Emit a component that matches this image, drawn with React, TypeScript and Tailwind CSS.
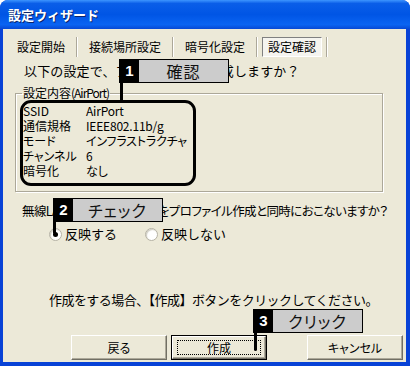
import React from "react";

const font = "font-['MS_UI_Gothic','Noto_Sans_CJK_JP',sans-serif]";
const palt = "[font-feature-settings:'palt']";

const Callout = ({ num, label, className }: { num: string; label: string; className: string }) => (
  <div className={`absolute flex h-[24px] w-[110px] border border-black ${className}`}>
    <div className="flex w-[19px] items-center justify-center bg-black font-['Liberation_Sans',sans-serif] text-[15px] font-bold text-white">
      {num}
    </div>
    <div className={`flex flex-1 items-center justify-center bg-[#cccccc] text-[16px] tracking-[1px] text-[#111] ${palt}`}>
      {label}
    </div>
  </div>
);

const Button = ({ label, primary }: { label: string; primary?: boolean }) => (
  <div className={`h-[25px] w-[96px] ${primary ? "border border-black" : ""}`}>
    <div className={`flex h-full w-full items-center justify-center border border-t-white border-l-white border-r-[#716f64] border-b-[#716f64] bg-[#ece9d8] text-[12px] shadow-[inset_-1px_-1px_0_#aca899] ${palt}`}>
      {primary ? (
        <span className="flex h-[15px] w-[84px] items-center justify-center border border-dotted border-black">
          {label}
        </span>
      ) : (
        label
      )}
    </div>
  </div>
);

const Radio = ({ checked }: { checked?: boolean }) => (
  <div className="flex h-[13px] w-[13px] items-center justify-center rounded-full border border-[#b5b2a4] bg-white shadow-[inset_1px_1px_1px_#cfcdc2]">
    {checked && <div className="h-[5px] w-[5px] rounded-full bg-black" />}
  </div>
);

const Sep = () => <div className="h-[20px] w-[2px] border-l border-l-[#aca899] border-r border-r-white" />;

const rows = [
  ["SSID", "AirPort"],
  ["通信規格", "IEEE802.11b/g"],
  ["モード", "インフラストラクチャ"],
  ["チャンネル", "6"],
  ["暗号化", "なし"],
];

export default function App() {
  return (
    <div className={`h-[366px] w-[410px] bg-white text-black ${font}`}>
      <div className="flex h-full w-full flex-col overflow-hidden rounded-t-[8px] bg-[#0842d6]">
        {/* title bar */}
        <div className="flex h-[29px] items-center bg-[linear-gradient(#3d95ff_0%,#0a5ee8_12%,#0055e5_50%,#0a64f2_85%,#0748d4_100%)] pl-[8px]">
          <span className="text-[13px] font-bold text-white [text-shadow:1px_1px_0_#0a246a]">設定ウィザード</span>
        </div>

        {/* client */}
        <div className="relative mb-[4px] ml-[3px] mr-[4px] flex flex-1 flex-col bg-[#ece9d8]">
          <div className="mt-[8px] flex h-[20px] items-center pl-[14px] text-[12px]">
            <span className="pr-[11px]">設定開始</span>
            <Sep />
            <span className="px-[11px]">接続場所設定</span>
            <Sep />
            <span className="px-[11px]">暗号化設定</span>
            <Sep />
            <span className="mx-[4px] flex h-[20px] items-center border border-t-[#808080] border-l-[#808080] border-b-white border-r-white bg-[#f5f4ef] px-[5px]">
              設定確認
            </span>
            <Sep />
          </div>

          <div className="mt-[5px] h-[18px] pl-[21px] text-[13px] leading-[18px] tracking-[0.15px]">
            以下の設定で、プロファイルを作成しますか？
          </div>

          <fieldset className="ml-[12px] mt-[6px] h-[106px] w-[368px] border border-[#aca899] px-[4px] pb-0 shadow-[inset_1px_1px_0_#fff,1px_1px_0_#fff]">
            <legend className={`ml-[2px] px-[1px] text-[12px] leading-[14px] ${palt}`}>
              設定内容<span className="tracking-[-1px]">(AirPort)</span>
            </legend>
            <div className={`w-[176px] rounded-[11px] border-[3px] border-black pb-[5px] text-[12px] leading-[15px] ${palt}`}>
              {rows.map(([k, v]) => (
                <div key={k} className="flex">
                  <span className="w-[63px]">{k}</span>
                  <span className="tracking-[-0.2px]">{v}</span>
                </div>
              ))}
            </div>
          </fieldset>

          <div className={`mt-[11px] h-[16px] whitespace-nowrap pl-[19px] text-[12.5px] leading-[16px] tracking-[-0.6px] ${palt}`}>
            無線LANアダプタへの設定をプロファイル作成と同時におこないますか？
          </div>

          <div className="mt-[7px] flex h-[16px] items-center pl-[46px] text-[13px]">
            <Radio checked />
            <span className="ml-[3px] w-[80px]">反映する</span>
            <Radio />
            <span className="ml-[3px]">反映しない</span>
          </div>

          <div className="mt-[50px] h-[16px] pl-[46px] text-[13px] leading-[16px] tracking-[-0.55px]">
            作成をする場合、【作成】ボタンをクリックしてください。
          </div>

          <div className="mt-[27px] flex pl-[68px]">
            <Button label="戻る" />
            <div className="w-[4px]" />
            <Button label="作成" primary />
            <div className="w-[40px]" />
            <Button label="キャンセル" />
          </div>

          {/* annotations */}
          <Callout num="1" label="確認" className="left-[116px] top-[30px]" />
          <div className="absolute left-[117px] top-[54px] h-[18px] w-[3px] bg-black" />
          <Callout num="2" label="チェック" className="left-[50px] top-[169px]" />
          <div className="absolute left-[50px] top-[193px] h-[12px] w-[3px] rounded-b-full bg-black" />
          <Callout num="3" label="クリック" className="left-[250px] top-[280px]" />
          <div className="absolute left-[251px] top-[304px] h-[18px] w-[3px] rounded-b-full bg-black" />
        </div>
      </div>
    </div>
  );
}
